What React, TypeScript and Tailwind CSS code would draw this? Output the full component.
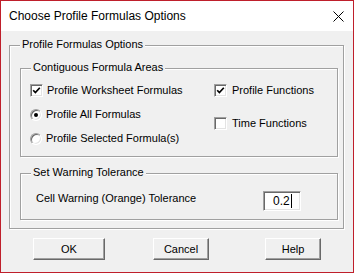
import React from "react"

function CheckBox({ checked }: { checked?: boolean }) {
  return (
    <div className="w-[13px] h-[13px] shrink-0 bg-white border border-t-[#a0a0a0] border-l-[#a0a0a0] border-b-white border-r-white shadow-[inset_1px_1px_0_#696969,inset_-1px_-1px_0_#e3e3e3] flex items-center justify-center">
      {checked && (
        <svg width="9" height="9" viewBox="0 0 9 9">
          <path d="M1.2 4.2 L3.4 6.6 L7.8 1.8" fill="none" stroke="#000" strokeWidth="1.7" />
        </svg>
      )}
    </div>
  )
}

function Radio({ checked }: { checked?: boolean }) {
  return (
    <div className="w-[12px] h-[12px] shrink-0 rounded-full bg-white border border-t-[#a0a0a0] border-l-[#a0a0a0] border-b-white border-r-white shadow-[inset_1px_1px_0_#696969,inset_-1px_-1px_0_#e3e3e3] flex items-center justify-center">
      {checked && <div className="w-[4px] h-[4px] rounded-full bg-black" />}
    </div>
  )
}

function GroupBox({ label, className, children }: { label: string; className: string; children: React.ReactNode }) {
  return (
    <div className={`relative border border-[#a0a0a0] shadow-[inset_1px_1px_0_#fff,1px_1px_0_#fff] ${className}`}>
      <span className="absolute left-[10px] -top-[8px] px-[2px] bg-[#f0f0f0] leading-[13px] whitespace-nowrap">
        {label}
      </span>
      {children}
    </div>
  )
}

function Button({ label, width }: { label: string; width: string }) {
  return (
    <button className={`${width} h-[22px] bg-[#f0f0f0] border border-t-white border-l-white border-b-[#696969] border-r-[#696969] shadow-[inset_-1px_-1px_0_#a0a0a0] text-[11px] leading-none text-black`}>
      {label}
    </button>
  )
}

export default function App() {
  return (
    <div className="w-[354px] h-[273px] border border-[#bf1f2b] bg-[#f0f0f0] flex flex-col font-['Liberation_Sans',Arial,sans-serif] text-[11px] text-black">
      {/* Title bar */}
      <div className="h-[30px] bg-white flex items-center justify-between pl-[8px] pr-[9px] shrink-0">
        <span className="text-[12px]">Choose Profile Formulas Options</span>
        <svg width="11" height="11" viewBox="0 0 11 11">
          <path d="M0.5 0.5 L10.5 10.5 M10.5 0.5 L0.5 10.5" stroke="#000" strokeWidth="1" />
        </svg>
      </div>

      <div className="pl-[8px] pt-[14px]">
        <GroupBox label="Profile Formulas Options" className="w-[335px] h-[184px] pl-[10px] pt-[22px]">
          <GroupBox label="Contiguous Formula Areas" className="w-[318px] h-[89px] pl-[9px] pt-[15px]">
            <div className="grid grid-cols-[184px_1fr]">
              <div className="flex flex-col gap-[11px]">
                <label className="flex items-center gap-[4px] h-[13px]">
                  <CheckBox checked />
                  <span>Profile Worksheet Formulas</span>
                </label>
                <label className="flex items-center gap-[4px] h-[13px]">
                  <Radio checked />
                  <span>Profile All Formulas</span>
                </label>
                <label className="flex items-center gap-[4px] h-[13px]">
                  <Radio />
                  <span>Profile Selected Formula(s)</span>
                </label>
              </div>
              <div className="flex flex-col gap-[20px]">
                <label className="flex items-center gap-[5px] h-[13px]">
                  <CheckBox checked />
                  <span>Profile Functions</span>
                </label>
                <label className="flex items-center gap-[5px] h-[13px]">
                  <CheckBox />
                  <span>Time Functions</span>
                </label>
              </div>
            </div>
          </GroupBox>

          <GroupBox label="Set Warning Tolerance" className="mt-[16px] w-[318px] h-[47px] pl-[15px] pt-[17px]">
            <div className="flex items-start">
              <span className="leading-[13px] mt-[1px]">Cell Warning (Orange) Tolerance</span>
              <div className="ml-auto mr-[36px] w-[38px] h-[20px] bg-white border border-t-[#a0a0a0] border-l-[#a0a0a0] border-b-white border-r-white shadow-[inset_1px_1px_0_#696969,inset_-1px_-1px_0_#e3e3e3] flex items-center pl-[9px]">
                <span className="text-[12px] leading-none">0.2</span>
                <span className="ml-[1px] w-[1px] h-[14px] bg-black" />
              </div>
            </div>
          </GroupBox>
        </GroupBox>
      </div>

      <div className="flex pl-[32px] pt-[9px]">
        <Button label="OK" width="w-[72px]" />
        <div className="ml-[48px]">
          <Button label="Cancel" width="w-[56px]" />
        </div>
        <div className="ml-[56px]">
          <Button label="Help" width="w-[56px]" />
        </div>
      </div>
    </div>
  )
}
